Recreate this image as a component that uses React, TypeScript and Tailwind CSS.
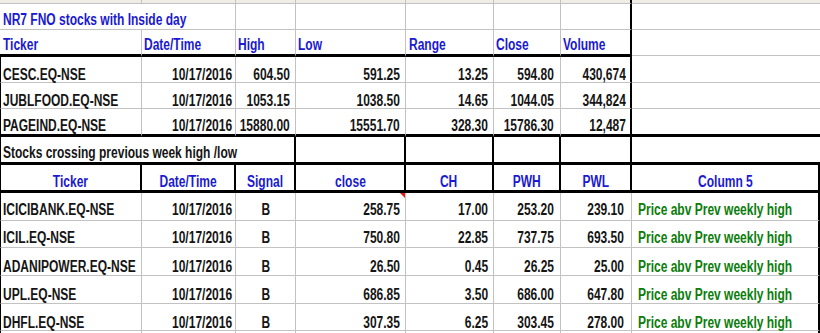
import type { ReactNode } from "react";

const G = "border-[#c2c2c2]";

type Align = "l" | "r" | "c";

function Txt({ children, align, color }: { children: ReactNode; align: Align; color: string }) {
  const origin = align === "r" ? "origin-right" : align === "c" ? "origin-center" : "origin-left";
  return (
    <span className={`inline-block whitespace-nowrap leading-[13px] scale-x-[0.75] ${origin} ${color}`}>
      {children}
    </span>
  );
}

type CellProps = {
  w: string;
  border: string;
  align?: Align;
  pad?: string;
  color?: string;
  children?: ReactNode;
  overlay?: ReactNode;
};

function Cell({ w, border, align = "l", pad = "", color = "text-[#151515]", children, overlay }: CellProps) {
  const justify = align === "r" ? "justify-end" : align === "c" ? "justify-center" : "justify-start";
  return (
    <div className={`relative flex shrink-0 items-end ${w} ${justify} ${border} ${pad}`}>
      {children !== undefined && <Txt align={align} color={color}>{children}</Txt>}
      {overlay}
    </div>
  );
}

const BLUE = "text-[#1a1ad0]";
const GREEN = "text-[#0b7d0b]";

// thin gray grid line on right + bottom
const gg = `border-r border-b ${G}`;
const thick = "border-r-2 border-r-black border-b-[3px] border-b-black";

const topRows = [
  { t: "CESC.EQ-NSE", d: "10/17/2016", hi: "604.50", lo: "591.25", rg: "13.25", cl: "594.80", v: "430,674", h: "h-[26px]", pb: "pb-[1px]", last: false },
  { t: "JUBLFOOD.EQ-NSE", d: "10/17/2016", hi: "1053.15", lo: "1038.50", rg: "14.65", cl: "1044.05", v: "344,824", h: "h-[26px]", pb: "pb-[1px]", last: false },
  { t: "PAGEIND.EQ-NSE", d: "10/17/2016", hi: "15880.00", lo: "15551.70", rg: "328.30", cl: "15786.30", v: "12,487", h: "h-[28px]", pb: "pb-[2px]", last: true },
];

const lowRows = [
  { t: "ICICIBANK.EQ-NSE", cl: "258.75", ch: "17.00", pwh: "253.20", pwl: "239.10", h: "h-[28px]", pb: "pb-[4px]", mark: true },
  { t: "ICIL.EQ-NSE", cl: "750.80", ch: "22.85", pwh: "737.75", pwl: "693.50", h: "h-[27px]", pb: "pb-[3px]", mark: false },
  { t: "ADANIPOWER.EQ-NSE", cl: "26.50", ch: "0.45", pwh: "26.25", pwl: "25.00", h: "h-[28px]", pb: "pb-[2px]", mark: false },
  { t: "UPL.EQ-NSE", cl: "686.85", ch: "3.50", pwh: "686.00", pwl: "647.80", h: "h-[28px]", pb: "pb-[2px]", mark: false },
  { t: "DHFL.EQ-NSE", cl: "307.35", ch: "6.25", pwh: "303.45", pwl: "278.00", h: "h-[27px]", pb: "pb-[1px]", mark: false },
];

export default function App() {
  return (
    <div className="w-[820px] h-[333px] overflow-hidden bg-white font-['Liberation_Sans',Arial,sans-serif] font-bold text-[16px]">
      {/* strip of the row above */}
      <div className="flex h-[4px] bg-[#efeee6]">
        <Cell w="w-[142px]" border={gg} />
        <Cell w="w-[94px]" border={gg} />
        <Cell w="w-[60px]" border={gg} />
        <Cell w="w-[110px]" border={gg} />
        <Cell w="w-[88px]" border={gg} />
        <Cell w="w-[67px]" border={gg} />
        <Cell w="w-[71px]" border={`border-b ${G} border-r-2 border-r-black`} />
        <Cell w="w-[188px]" border={`border-b ${G}`} />
      </div>

      {/* title */}
      <div className="flex h-[26px]">
        <Cell w="w-[236px]" border={gg} pad="pl-[3px] pb-[3px]" color={BLUE}>NR7 FNO stocks with Inside day</Cell>
        <Cell w="w-[60px]" border={gg} />
        <Cell w="w-[110px]" border={gg} />
        <Cell w="w-[88px]" border={gg} />
        <Cell w="w-[67px]" border={gg} />
        <Cell w="w-[71px]" border={`border-b ${G} border-r-2 border-r-black`} />
        <Cell w="w-[188px]" border={`border-b ${G}`} />
      </div>

      {/* header */}
      <div className="flex h-[27px]">
        <Cell w="w-[142px]" border={`border-r ${G} border-b-[3px] border-b-black`} pad="pl-[3px] pb-[3px]" color={BLUE}>Ticker</Cell>
        <Cell w="w-[94px]" border={`border-r ${G} border-b-[3px] border-b-black`} pad="pl-[2px] pb-[3px]" color={BLUE}>Date/Time</Cell>
        <Cell w="w-[60px]" border={`border-r ${G} border-b-[3px] border-b-black`} pad="pl-[2px] pb-[3px]" color={BLUE}>High</Cell>
        <Cell w="w-[110px]" border={`border-r ${G} border-b-[3px] border-b-black`} pad="pl-[2px] pb-[3px]" color={BLUE}>Low</Cell>
        <Cell w="w-[88px]" border={`border-r ${G} border-b-[3px] border-b-black`} pad="pl-[3px] pb-[3px]" color={BLUE}>Range</Cell>
        <Cell w="w-[67px]" border={`border-r ${G} border-b-[3px] border-b-black`} pad="pl-[2px] pb-[3px]" color={BLUE}>Close</Cell>
        <Cell w="w-[71px]" border={thick} pad="pl-[2px] pb-[3px]" color={BLUE}>Volume</Cell>
        <Cell w="w-[188px]" border={`border-b ${G} mb-[1px]`} />
      </div>

      {/* NR7 rows */}
      {topRows.map((r) => {
        const bb = r.last ? "border-b-[3px] border-b-black" : `border-b ${G}`;
        const rb = `border-r ${G} ${bb}`;
        return (
          <div key={r.t} className={`flex ${r.h}`}>
            <Cell w="w-[142px]" border={`border-l border-l-black ${rb}`} pad={`pl-[2px] ${r.pb}`}>{r.t}</Cell>
            <Cell w="w-[94px]" border={rb} align="r" pad={`pr-[3px] ${r.pb}`}>{r.d}</Cell>
            <Cell w="w-[60px]" border={rb} align="r" pad={`pr-[5px] ${r.pb}`}>{r.hi}</Cell>
            <Cell w="w-[110px]" border={rb} align="r" pad={`pr-[5px] ${r.pb}`}>{r.lo}</Cell>
            <Cell w="w-[88px]" border={rb} align="r" pad={`pr-[5px] ${r.pb}`}>{r.rg}</Cell>
            <Cell w="w-[67px]" border={rb} align="r" pad={`pr-[6px] ${r.pb}`}>{r.cl}</Cell>
            <Cell w="w-[71px]" border={`border-r-2 border-r-black ${bb}`} align="r" pad={`pr-[4px] ${r.pb}`}>{r.v}</Cell>
            <Cell w="w-[188px]" border={bb} />
          </div>
        );
      })}

      {/* section 2 title */}
      <div className="flex h-[28px]">
        <Cell w="w-[296px]" border={`border-l border-l-black ${thick}`} pad="pl-[2px] pb-[3px]">
          Stocks crossing previous week high /low
        </Cell>
        <Cell w="w-[110px]" border={thick} />
        <Cell w="w-[88px]" border={thick} />
        <Cell w="w-[67px]" border={thick} />
        <Cell w="w-[71px]" border={thick} />
        <Cell w="w-[188px]" border="border-b-[3px] border-b-black" />
      </div>

      {/* section 2 header */}
      <div className="flex h-[28px]">
        <Cell w="w-[142px]" border={`border-l border-l-black ${thick}`} align="c" pad="pb-[2px]" color={BLUE}>Ticker</Cell>
        <Cell w="w-[94px]" border={thick} align="c" pad="pb-[2px]" color={BLUE}>Date/Time</Cell>
        <Cell w="w-[60px]" border={thick} align="c" pad="pb-[2px]" color={BLUE}>Signal</Cell>
        <Cell w="w-[110px]" border={thick} align="c" pad="pb-[2px]" color={BLUE}>close</Cell>
        <Cell w="w-[88px]" border={thick} align="c" pad="pb-[2px]" color={BLUE}>CH</Cell>
        <Cell w="w-[67px]" border={thick} align="c" pad="pb-[2px]" color={BLUE}>PWH</Cell>
        <Cell w="w-[71px]" border={thick} align="c" pad="pb-[2px]" color={BLUE}>PWL</Cell>
        <Cell w="w-[188px]" border={thick} align="c" pad="pb-[2px]" color={BLUE}>Column 5</Cell>
      </div>

      {/* section 2 rows */}
      {lowRows.map((r) => (
        <div key={r.t} className={`flex ${r.h}`}>
          <Cell w="w-[142px]" border={`border-l border-l-black ${gg}`} pad={`pl-[2px] ${r.pb}`}>{r.t}</Cell>
          <Cell w="w-[94px]" border={gg} align="r" pad={`pr-[3px] ${r.pb}`}>10/17/2016</Cell>
          <Cell w="w-[60px]" border={gg} align="c" pad={r.pb}>B</Cell>
          <Cell
            w="w-[110px]"
            border={gg}
            align="r"
            pad={`pr-[5px] ${r.pb}`}
            overlay={
              r.mark ? (
                <span className="absolute right-0 top-0 w-0 h-0 border-t-[5px] border-t-[#e0201a] border-l-[5px] border-l-transparent" />
              ) : undefined
            }
          >
            {r.cl}
          </Cell>
          <Cell w="w-[88px]" border={gg} align="r" pad={`pr-[5px] ${r.pb}`}>{r.ch}</Cell>
          <Cell w="w-[67px]" border={gg} align="r" pad={`pr-[6px] ${r.pb}`}>{r.pwh}</Cell>
          <Cell w="w-[71px]" border={gg} align="r" pad={`pr-[7px] ${r.pb}`}>{r.pwl}</Cell>
          <Cell w="w-[188px]" border={`border-b ${G} border-r-2 border-r-black`} pad={`pl-[6px] ${r.pb}`} color={GREEN}>
            Price abv Prev weekly high
          </Cell>
        </div>
      ))}

      {/* bit of the next row */}
      <div className="flex h-[3px]">
        <Cell w="w-[142px]" border={`border-l border-l-black border-r ${G}`} />
        <Cell w="w-[94px]" border={`border-r ${G}`} />
        <Cell w="w-[60px]" border={`border-r ${G}`} />
        <Cell w="w-[110px]" border={`border-r ${G}`} />
        <Cell w="w-[88px]" border={`border-r ${G}`} />
        <Cell w="w-[67px]" border={`border-r ${G}`} />
        <Cell w="w-[71px]" border={`border-r ${G}`} />
        <Cell w="w-[188px]" border="border-r-2 border-r-black" />
      </div>
    </div>
  );
}
